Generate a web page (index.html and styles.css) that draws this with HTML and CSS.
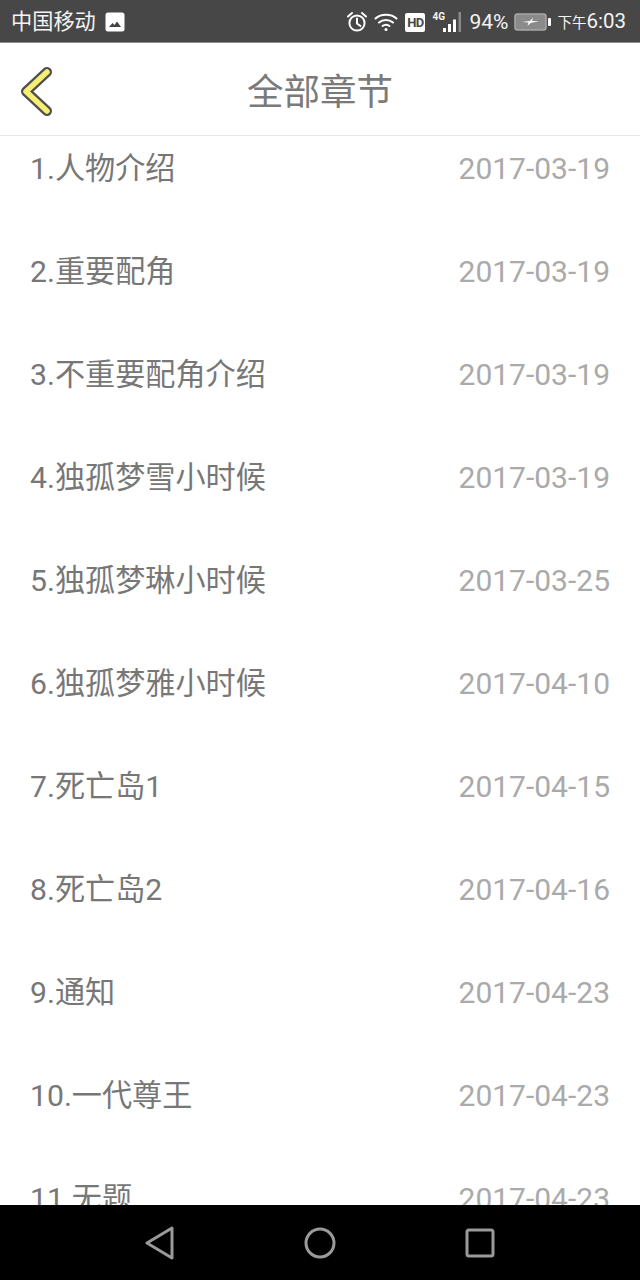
FILE: index.html
```html
<!DOCTYPE html>
<html lang="zh">
<head>
<meta charset="utf-8">
<title>全部章节</title>
<link rel="stylesheet" href="styles.css">
</head>
<body>
<div class="screen">
  <div class="status">
    <div class="status-left">
      <span class="carrier">中国移动</span>
      <svg class="pic" width="20" height="20" viewBox="0 0 20 20"><rect x="0.5" y="0.5" width="19" height="19" rx="2.5" fill="#fff"/><path d="M4 15l3.500-4 2 2 2.500-3.500 4 5.500z" fill="#444"/></svg>
    </div>
    <div class="status-right">
      <svg class="alarm" width="22" height="22" viewBox="0 0 22 22" fill="none" stroke="#fff" stroke-width="2"><circle cx="11" cy="12" r="7.600"/><path d="M11 7.500V12.500l3.500 2.500M2 5.500L6 2M20 5.500L16 2" stroke-linecap="round"/></svg>
      <svg class="wifi" width="24" height="20" viewBox="0 0 24 20" fill="none" stroke="#fff" stroke-width="2" stroke-linecap="round"><path d="M1.500 6.500C7 1.500 17 1.500 22.500 6.500M5 10.500C9 7 15 7 19 10.500M8.500 14C10.500 12.500 13.500 12.500 15.500 14"/><circle cx="12" cy="17.500" r="1.500" fill="#fff" stroke="none"/></svg>
      <span class="hd">HD</span>
      <span class="signal">
        <span class="net">4G</span>
        <svg width="20" height="20" viewBox="0 0 20 20"><path d="M0 16h3v4H0zM5 12h3v8H5zM10 7.500h3V20h-3z" fill="#fff"/><path d="M15.500 0H18V20h-2.500z" fill="#8a8a8a"/></svg>
      </span>
      <span class="pct">94%</span>
      <svg class="battery" width="37" height="18" viewBox="0 0 37 18"><rect x="1" y="1" width="31" height="16" rx="2.500" fill="#8a8a8a" stroke="#a8a8a8" stroke-width="1.500"/><rect x="34" y="5" width="3" height="8" rx="1" fill="#fff"/><path d="M8 9l8-1 3-3.500-1 3.500 7 .5-8 1.200-3.500 3 1-3.200z" fill="#fff"/></svg>
      <span class="clock"><span class="ampm">下午</span>6:03</span>
    </div>
  </div>
  <header class="topbar">
    <svg class="back" width="36" height="52" viewBox="0 0 36 52"><path d="M31 7L10 26.500 31 46" fill="none" stroke="#4f4f4f" stroke-width="10" stroke-linecap="round" stroke-linejoin="round"/><path d="M31 7L10 26.500 31 46" fill="none" stroke="#f7ee74" stroke-width="5.500" stroke-linecap="round" stroke-linejoin="round"/></svg>
    <h1 class="title">全部章节</h1>
  </header>
  <main class="list">
    <div class="row"><span class="name">1.人物介绍</span><span class="date">2017-03-19</span></div>
    <div class="row"><span class="name">2.重要配角</span><span class="date">2017-03-19</span></div>
    <div class="row"><span class="name">3.不重要配角介绍</span><span class="date">2017-03-19</span></div>
    <div class="row"><span class="name">4.独孤梦雪小时候</span><span class="date">2017-03-19</span></div>
    <div class="row"><span class="name">5.独孤梦琳小时候</span><span class="date">2017-03-25</span></div>
    <div class="row"><span class="name">6.独孤梦雅小时候</span><span class="date">2017-04-10</span></div>
    <div class="row"><span class="name">7.死亡岛1</span><span class="date">2017-04-15</span></div>
    <div class="row"><span class="name">8.死亡岛2</span><span class="date">2017-04-16</span></div>
    <div class="row"><span class="name">9.通知</span><span class="date">2017-04-23</span></div>
    <div class="row"><span class="name">10.一代尊王</span><span class="date">2017-04-23</span></div>
    <div class="row"><span class="name">11.无题</span><span class="date">2017-04-23</span></div>
  </main>
  <nav class="navbar">
    <svg width="30" height="34" viewBox="0 0 30 34" fill="none" stroke="#9a9a9a" stroke-width="3" stroke-linejoin="round"><path d="M27 2L2 17l25 15z"/></svg>
    <svg width="32" height="32" viewBox="0 0 32 32" fill="none" stroke="#9a9a9a" stroke-width="3"><circle cx="16" cy="16" r="14"/></svg>
    <svg width="30" height="30" viewBox="0 0 30 30" fill="none" stroke="#9a9a9a" stroke-width="3" stroke-linejoin="round"><rect x="2" y="2" width="26" height="26" rx="2"/></svg>
  </nav>
</div>
</body>
</html>
```
FILE: styles.css
```css
* { box-sizing: border-box; }
html, body { margin: 0; padding: 0; }
body { background: #fff; font-family: Roboto, "Noto Sans CJK SC", sans-serif; }
.screen { width: 640px; height: 1280px; display: flex; flex-direction: column; overflow: hidden; }

.status { height: 43px; flex: none; background: #474747; border-bottom: 1px solid #8c8c8c; color: #f4f4f4; display: flex; justify-content: space-between; align-items: center; padding: 2px 14px 0 11px; }
.status-left { display: flex; align-items: center; gap: 9px; }
.carrier { font-size: 21.2px; line-height: 28px; }
.status-right { display: flex; align-items: center; }
.alarm { margin-right: 6px; }
.wifi { margin-right: 7px; }
.hd { background: #fff; color: #474747; font-size: 13px; font-weight: 700; width: 20px; height: 19px; border-radius: 2px; line-height: 19px; text-align: center; margin-right: 7px; letter-spacing: -0.5px; }
.signal { display: flex; align-items: flex-end; position: relative; width: 31px; height: 20px; justify-content: flex-end; margin-right: 6px; }
.net { position: absolute; left: 0; top: 0; font-size: 10px; font-weight: 700; line-height: 10px; }
.pct { font-size: 21px; line-height: 26px; margin-right: 6px; }
.battery { margin-right: 6px; }
.clock { font-size: 20.500px; line-height: 26px; }
.ampm { font-size: 14.500px; }

.topbar { height: 93px; flex: none; background: #fff; border-bottom: 1px solid #e8e8e8; padding-top: 8px; display: flex; align-items: center; justify-content: center; position: relative; }
.back { position: absolute; left: 16px; top: 22px; }
.title { margin: 0; font-size: 36.500px; line-height: 48px; font-weight: 400; color: #7a7a7a; }

.list { flex: 1; min-height: 0; overflow: hidden; padding: 13px 30px 0 30px; background: #fff; }
.row { height: 103px; display: flex; justify-content: space-between; align-items: flex-start; line-height: 40px; }
.name { font-size: 30.150px; color: #777; }
.date { font-size: 30px; color: #aaa; }

.navbar { height: 75px; flex: none; background: #000; display: grid; grid-template-columns: 30px 32px 30px; justify-content: center; column-gap: 129px; align-items: center; }
```
